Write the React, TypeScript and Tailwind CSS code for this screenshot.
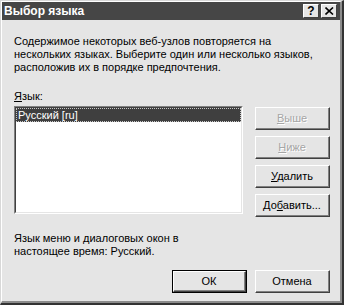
import React from "react";

const font = "font-['Liberation_Sans',Arial,sans-serif]";

function Btn({
  children,
  disabled,
  def,
}: {
  children: React.ReactNode;
  disabled?: boolean;
  def?: boolean;
}) {
  const inner = (
    <div className="h-full w-full border-t border-l border-t-white border-l-white border-r border-b border-r-[#404040] border-b-[#404040]">
      <div className="h-full w-full border-r border-b border-r-[#808080] border-b-[#808080] flex items-center justify-center">
        <span
          className={
            disabled
              ? "text-[11px] leading-none text-[#a6a6a6] [text-shadow:1px_1px_0_#ffffff]"
              : "text-[11px] leading-none text-black"
          }
        >
          {children}
        </span>
      </div>
    </div>
  );
  if (def) {
    return <div className="w-[75px] h-[23px] border border-black">{inner}</div>;
  }
  return <div className="w-[75px] h-[23px]">{inner}</div>;
}

export default function App() {
  return (
    <div className={`w-[344px] h-[305px] ${font} bg-[#e5e5e5] border-t border-l border-t-[#d8d8d8] border-l-[#d8d8d8] border-r-2 border-b-2 border-r-[#333333] border-b-[#333333]`}>
      <div className="h-full w-full flex flex-col border-t border-l border-t-white border-l-white border-r-2 border-b-2 border-r-[#8c8c8c] border-b-[#8c8c8c]">
        <div className="h-[18px] bg-[#464646] flex items-center justify-between pl-[2px] pr-[3px]">
          <span className="text-white font-bold text-[12px] leading-none">Выбор языка</span>
          <div className="flex gap-[2px]">
            <div className="w-[16px] h-[14px] bg-[#e5e5e5] border-t border-l border-t-white border-l-white border-r border-b border-r-[#404040] border-b-[#404040] flex items-center justify-center">
              <span className="text-[12px] font-bold leading-none text-black">?</span>
            </div>
            <div className="w-[16px] h-[14px] bg-[#e5e5e5] border-t border-l border-t-white border-l-white border-r border-b border-r-[#404040] border-b-[#404040] flex items-center justify-center">
              <svg width="9" height="8" viewBox="0 0 9 8">
                <path d="M0.5 0.5 L8 7.5 M8 0.5 L0.5 7.5" stroke="#000" strokeWidth="1.6" />
              </svg>
            </div>
          </div>
        </div>

        <div className="flex flex-col pl-[12px] pr-[10px] text-[11px] leading-[13px] text-black">
          <p className="mt-[15px] whitespace-nowrap">
            Содержимое некоторых веб-узлов повторяется на
            <br />
            нескольких языках. Выберите один или несколько языков,
            <br />
            расположив их в порядке предпочтения.
          </p>

          <div className="mt-[16px]">
            <span className="underline">Я</span>зык:
          </div>

          <div className="mt-[3px] flex">
            <div className="w-[229px] h-[108px] bg-white border-t border-l border-t-[#808080] border-l-[#808080] border-r border-b border-r-white border-b-white">
              <div className="h-full w-full border-t border-l border-t-[#404040] border-l-[#404040] border-r border-b border-r-[#e5e5e5] border-b-[#e5e5e5]">
                <div className="h-[14px] bg-[#3f3f3f] border border-dotted border-[#c8c8c8] text-white leading-[12px] pl-[1px]">
                  Русский [ru]
                </div>
              </div>
            </div>
            <div className="ml-[12px] mt-[1px] flex flex-col gap-[6px]">
              <Btn disabled>
                <span className="underline">В</span>ыше
              </Btn>
              <Btn disabled>
                <span className="underline">Н</span>иже
              </Btn>
              <Btn>
                <span className="underline">У</span>далить
              </Btn>
              <Btn>
                До<span className="underline">б</span>авить...
              </Btn>
            </div>
          </div>

          <p className="mt-[15px] whitespace-nowrap">
            Язык меню и диалоговых окон в
            <br />
            настоящее время: Русский.
          </p>

          <div className="mt-[12px] flex justify-end gap-[8px]">
            <Btn def>ОК</Btn>
            <Btn>Отмена</Btn>
          </div>
        </div>
      </div>
    </div>
  );
}
